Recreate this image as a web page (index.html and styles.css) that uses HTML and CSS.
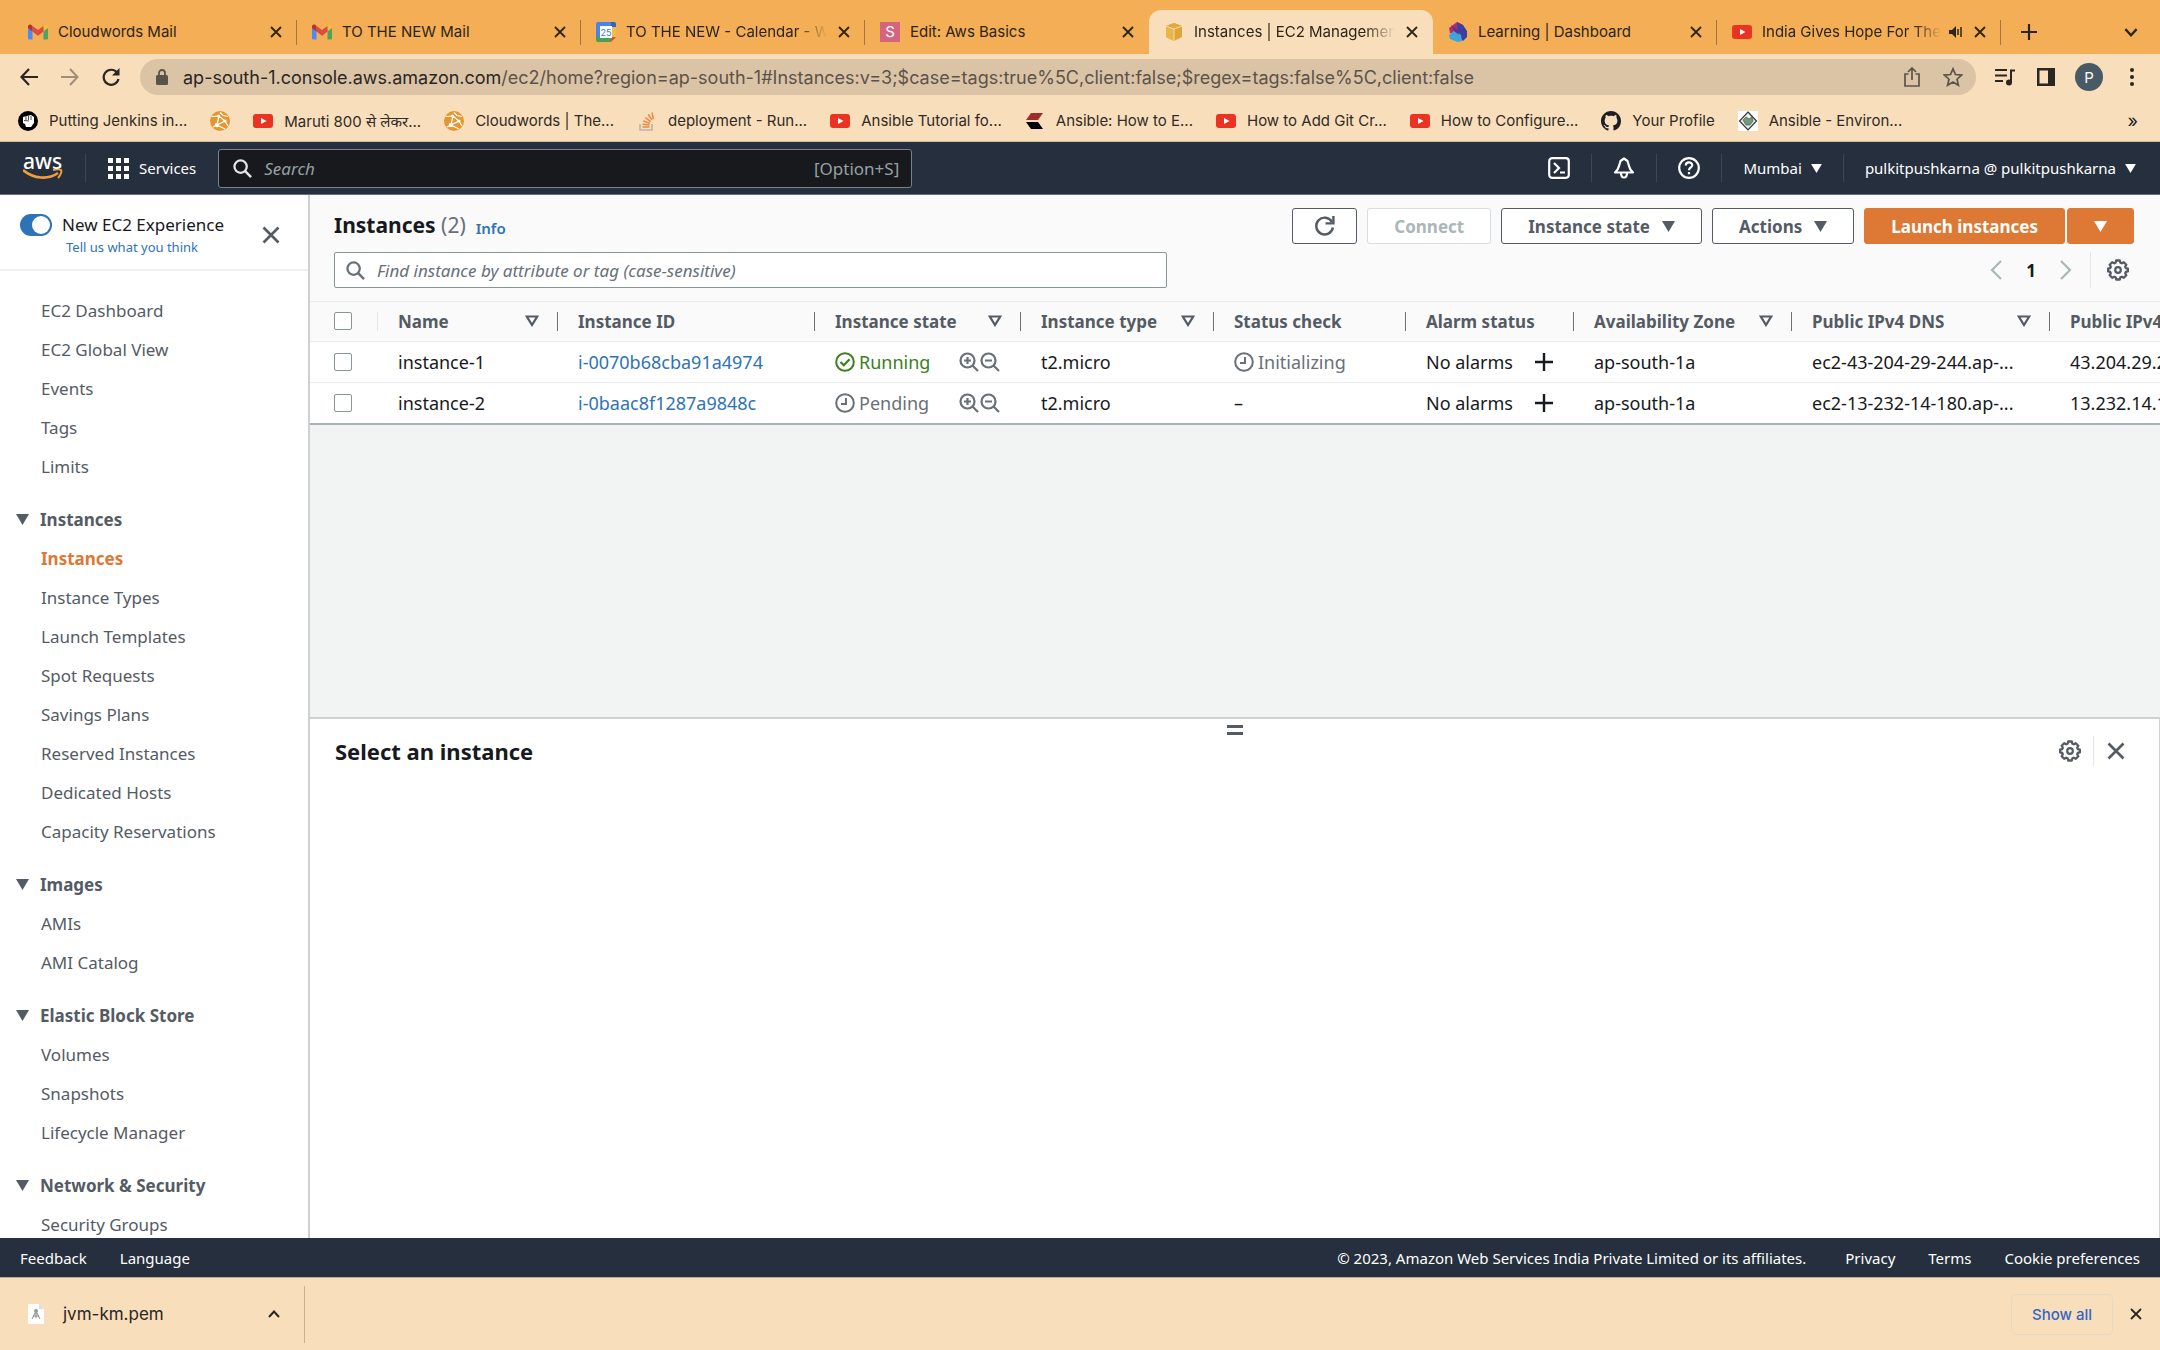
FILE: index.html
```html
<!DOCTYPE html>
<html lang="en">

<head>
    <meta charset="UTF-8">
    <meta name="viewport" content="width=device-width, initial-scale=1.0">
    <title>Instances | EC2 Management Console</title>
    <link rel="stylesheet" href="styles.css">
</head>

<body>

    <!-- shared icons -->
    <svg class="sprite" aria-hidden="true">
        <symbol id="i-close" viewBox="0 0 12 12"><path d="M1 1l10 10M11 1L1 11" fill="none" stroke="currentColor" stroke-width="1.8"/></symbol>
        <symbol id="i-gmail" viewBox="0 0 20 15">
            <path d="M0 2v11.500a1.500 1.500 0 0 0 1.500 1.500H4.500V5z" fill="#4c8bf5"/>
            <path d="M20 2v11.500a1.500 1.500 0 0 1-1.500 1.500H15.500V5z" fill="#4aa45a"/>
            <path d="M15.500 1.500V7L20 3.600V2c0-1.800-2-2.700-3.400-1.600z" fill="#f2bd42"/>
            <path d="M4.500 7V1.500L10 5.600l5.500-4.100V7L10 11.200z" fill="#dc4b3e"/>
            <path d="M0 2v1.600L4.500 7V1.500L3.400.4C2-.7 0 .2 0 2z" fill="#b93226"/>
        </symbol>
        <symbol id="i-youtube" viewBox="0 0 20 14"><rect width="20" height="14" rx="3" fill="#ea3323"/><path d="M8 4l5.500 3L8 10z" fill="#fff"/></symbol>
        <symbol id="i-cloudwords" viewBox="0 0 20 20"><circle cx="10" cy="10" r="10" fill="#e5962f"/><path d="M1.500 5.500L9 5l6 5-8 4-4 2M9 5L7 14M15 10l3 5M7 14l8 4M10 1.500l3 3 5 1" fill="none" stroke="#fff" stroke-width="1.200"/><circle cx="8.500" cy="5" r="1.500" fill="#fff"/><circle cx="7" cy="14" r="2.200" fill="#fff"/><circle cx="15" cy="10" r="1.600" fill="#fff"/></symbol>
        <symbol id="i-search" viewBox="0 0 20 20"><circle cx="8" cy="8" r="6.500" fill="none" stroke="currentColor" stroke-width="2.400"/><path d="M12.800 12.800L19 19" stroke="currentColor" stroke-width="2.600"/></symbol>
        <symbol id="i-down" viewBox="0 0 12 10"><path d="M0 0h12L6 10z" fill="currentColor"/></symbol>
        <symbol id="i-sort" viewBox="0 0 14 12"><path d="M1.800 1.500h10.400L7 10z" fill="none" stroke="currentColor" stroke-width="2.200"/></symbol>
        <symbol id="i-gear" viewBox="0 0 22 22">
            <path d="M9.200 1.500h3.600l.6 2.200 1.400.6 2-1.100 2.500 2.500-1.100 2 .6 1.400 2.100.6v2.600l-2.100.6-.6 1.400 1.100 2-2.500 2.500-2-1.100-1.400.6-.6 2.200H9.200l-.6-2.200-1.400-.6-2 1.100-2.500-2.500 1.100-2-.6-1.400-2.100-.6V9.700l2.100-.6.6-1.400-1.100-2 2.500-2.500 2 1.100 1.400-.6z" fill="none" stroke="currentColor" stroke-width="2.300" stroke-linejoin="round"/>
            <circle cx="11" cy="11" r="2.800" fill="none" stroke="currentColor" stroke-width="2.200"/>
        </symbol>
        <symbol id="i-clock" viewBox="0 0 20 20"><circle cx="10" cy="10" r="8.800" fill="none" stroke="currentColor" stroke-width="2"/><path d="M11 5v6H6" fill="none" stroke="currentColor" stroke-width="2"/></symbol>
        <symbol id="i-check" viewBox="0 0 20 20"><circle cx="10" cy="10" r="8.800" fill="none" stroke="currentColor" stroke-width="2"/><path d="M5.500 10l3.300 3.300 5.800-6" fill="none" stroke="currentColor" stroke-width="2.200"/></symbol>
        <symbol id="i-zoom-in" viewBox="0 0 20 20"><circle cx="8.500" cy="8.500" r="7" fill="none" stroke="currentColor" stroke-width="2.200"/><path d="M13.500 13.500L19 19M8.500 5v7M5 8.500h7" stroke="currentColor" stroke-width="2.200"/></symbol>
        <symbol id="i-zoom-out" viewBox="0 0 20 20"><circle cx="8.500" cy="8.500" r="7" fill="none" stroke="currentColor" stroke-width="2.200"/><path d="M13.500 13.500L19 19M5 8.500h7" stroke="currentColor" stroke-width="2.200"/></symbol>
        <symbol id="i-plus" viewBox="0 0 18 18"><path d="M9 0v18M0 9h18" stroke="currentColor" stroke-width="2.400"/></symbol>
    </svg>

    <div class="tab-strip">
        <div class="tab">
            <svg class="tab-icon"><use href="#i-gmail"/></svg>
            <span class="tab-title">Cloudwords Mail</span>
            <button class="tab-close" aria-label="Close tab"><svg><use href="#i-close"/></svg></button>
        </div>
        <div class="tab">
            <svg class="tab-icon"><use href="#i-gmail"/></svg>
            <span class="tab-title">TO THE NEW Mail</span>
            <button class="tab-close" aria-label="Close tab"><svg><use href="#i-close"/></svg></button>
        </div>
        <div class="tab">
            <svg class="tab-icon" viewBox="0 0 20 20">
                <path d="M2 0h14v5H5v10H0V2a2 2 0 0 1 2-2z" fill="#4a83ee"/>
                <path d="M15 0h3a2 2 0 0 1 2 2v3h-5z" fill="#2b66c9"/>
                <path d="M15 5h5v10h-5z" fill="#f3bc42"/>
                <path d="M0 15h15v5H2a2 2 0 0 1-2-2z" fill="#48a052"/>
                <path d="M15 15h5l-5 5z" fill="#dc4a3d"/>
                <path d="M4 4h12v12H4z" fill="#fff"/>
                <text x="10" y="14" class="cal-day">25</text>
            </svg>
            <span class="tab-title fade">TO THE NEW - Calendar - Week</span>
            <button class="tab-close" aria-label="Close tab"><svg><use href="#i-close"/></svg></button>
        </div>
        <div class="tab before-active">
            <span class="tab-icon tab-letter">S</span>
            <span class="tab-title">Edit: Aws Basics</span>
            <button class="tab-close" aria-label="Close tab"><svg><use href="#i-close"/></svg></button>
        </div>
        <div class="tab active">
            <svg class="tab-icon" viewBox="0 0 20 20">
                <path d="M10 1l8 3v11l-8 4-8-4V4z" fill="#dfa53a"/>
                <path d="M2 4l8 3v12l-8-4z" fill="#e9b44b"/>
                <path d="M2 4l8-3 8 3-8 3z" fill="#e3a93c"/>
                <path d="M2 4l8 3 8-3M10 7v12" fill="none" stroke="#f7dca0"/>
            </svg>
            <span class="tab-title fade">Instances | EC2 Management Console</span>
            <button class="tab-close" aria-label="Close tab"><svg><use href="#i-close"/></svg></button>
        </div>
        <div class="tab">
            <svg class="tab-icon" viewBox="0 0 20 20">
                <path d="M9 0l6 3 1 7-6 4-8-3L1 6z" fill="#b52c6d"/>
                <path d="M9 0l6 3 4 6v6l-4 4-5-5z" fill="#3b3f9f"/>
                <path d="M7 8l6 5 1 6-4 1-8-3-1-4z" fill="#39a6e0"/>
                <path d="M3 3l6 4 2 6-5-4z" fill="#6b2c91"/>
            </svg>
            <span class="tab-title">Learning | Dashboard</span>
            <button class="tab-close" aria-label="Close tab"><svg><use href="#i-close"/></svg></button>
        </div>
        <div class="tab">
            <svg class="tab-icon"><use href="#i-youtube"/></svg>
            <span class="tab-title fade">India Gives Hope For The World</span>
            <svg class="tab-audio" viewBox="0 0 14 12"><path d="M0 4h3l4-4v12L3 8H0z" fill="currentColor"/><path d="M9 3v6M12 1v10" stroke="currentColor" stroke-width="1.500"/></svg>
            <button class="tab-close" aria-label="Close tab"><svg><use href="#i-close"/></svg></button>
        </div>
        <button class="new-tab" aria-label="New tab"><svg viewBox="0 0 16 16"><path d="M8 0v16M0 8h16" stroke="currentColor" stroke-width="2.200"/></svg></button>
        <button class="tab-search" aria-label="Search tabs"><svg viewBox="0 0 12 8"><path d="M1 1l5 5.500L11 1" fill="none" stroke="currentColor" stroke-width="2"/></svg></button>
    </div>

    <div class="toolbar">
        <button aria-label="Back"><svg viewBox="0 0 20 20"><path d="M19 10H3M10 2l-7.500 8 7.500 8" fill="none" stroke="currentColor" stroke-width="2.200"/></svg></button>
        <button class="dim" aria-label="Forward"><svg viewBox="0 0 20 20"><path d="M1 10h16M10 2l7.500 8-7.500 8" fill="none" stroke="currentColor" stroke-width="2"/></svg></button>
        <button aria-label="Reload"><svg viewBox="0 0 20 20"><path d="M16 5.500A7.500 7.500 0 1 0 17.500 12" fill="none" stroke="currentColor" stroke-width="2.200"/><path d="M18.500 1v7.500H11z" fill="currentColor"/></svg></button>
        <div class="address">
            <svg class="lock" viewBox="0 0 12 16"><rect y="6" width="12" height="10" rx="1.500" fill="currentColor"/><path d="M3 7V4a3 3 0 0 1 6 0v3" fill="none" stroke="currentColor" stroke-width="1.800"/></svg>
            <span class="url"><b>ap-south-1.console.aws.amazon.com</b>/ec2/home?region=ap-south-1#Instances:v=3;$case=tags:true%5C,client:false;$regex=tags:false%5C,client:false</span>
            <button aria-label="Share"><svg viewBox="0 0 18 20"><path d="M5.500 7H2v12h14V7h-3.500M9 13V1.500M5 5l4-4 4 4" fill="none" stroke="currentColor" stroke-width="1.700"/></svg></button>
            <button aria-label="Bookmark this tab"><svg viewBox="0 0 20 20"><path d="M10 1.800l2.500 5.700 6.200.6-4.700 4.100 1.400 6.100L10 15.100l-5.400 3.200L6 12.200 1.300 8.100l6.200-.6z" fill="none" stroke="currentColor" stroke-width="1.700"/></svg></button>
        </div>
        <button aria-label="Media controls"><svg viewBox="0 0 20 20"><path d="M0 3h12M0 8.500h12M0 14h8M16 15V3.500h4" fill="none" stroke="currentColor" stroke-width="2"/><circle cx="14" cy="15.500" r="3" fill="currentColor"/></svg></button>
        <button aria-label="Side panel"><svg viewBox="0 0 20 20"><path d="M1 1h18v18H1zM3.500 3.500v13H12v-13z" fill="currentColor" fill-rule="evenodd"/></svg></button>
        <button class="avatar">P</button>
        <button aria-label="Menu"><svg viewBox="0 0 20 20"><g fill="currentColor"><circle cx="10" cy="3" r="2"/><circle cx="10" cy="10" r="2"/><circle cx="10" cy="17" r="2"/></g></svg></button>
    </div>

    <div class="bookmarks">
        <a href="#"><svg viewBox="0 0 20 20"><circle cx="10" cy="10" r="10" fill="#000"/><path d="M5 6l8-2 3 2v6l-3 4H8l-1-3-2-1z" fill="#fff"/><path d="M8 5.500V9M10.500 5v4M13 5v4M6 9.500l5 .5" stroke="#000" stroke-width=".7"/></svg>Putting Jenkins in...</a>
        <a href="#" aria-label="Cloudwords"><svg><use href="#i-cloudwords"/></svg></a>
        <a href="#"><svg><use href="#i-youtube"/></svg>Maruti 800 से लेकर...</a>
        <a href="#"><svg><use href="#i-cloudwords"/></svg>Cloudwords | The...</a>
        <a href="#"><svg viewBox="0 0 20 20"><path d="M3 13v6h12v-6" fill="none" stroke="#b9b5b0" stroke-width="1.600"/><path d="M5.500 16h7M5.600 13.200l7 .8M6.300 10l6.600 2.200M8.200 6.500l5.500 4.200M11.200 3.500l4 5.500M15 1.500l1.500 6.500" stroke="#e88a45" stroke-width="1.500"/></svg>deployment - Run...</a>
        <a href="#"><svg><use href="#i-youtube"/></svg>Ansible Tutorial fo...</a>
        <a href="#"><svg viewBox="0 0 20 20"><path d="M6 2h12l-5 7H1z" fill="#a12c2c"/><path d="M1 11h12l5 7H6z" fill="#000"/></svg>Ansible: How to E...</a>
        <a href="#"><svg><use href="#i-youtube"/></svg>How to Add Git Cr...</a>
        <a href="#"><svg><use href="#i-youtube"/></svg>How to Configure...</a>
        <a href="#"><svg viewBox="0 0 16 16"><path fill="#1b1f23" d="M8 0C3.580 0 0 3.580 0 8c0 3.540 2.290 6.530 5.470 7.590.4.070.550-.170.550-.380 0-.190-.010-.820-.010-1.490-2.010.370-2.530-.490-2.690-.940-.090-.230-.480-.940-.820-1.130-.280-.150-.680-.520-.010-.530.630-.010 1.080.580 1.230.820.720 1.210 1.870.870 2.330.660.070-.520.280-.870.510-1.070-1.780-.2-3.640-.890-3.640-3.950 0-.870.310-1.590.820-2.150-.080-.2-.360-1.020.080-2.120 0 0 .670-.210 2.200.820.640-.180 1.320-.270 2-.270s1.360.090 2 .270c1.530-1.040 2.200-.820 2.200-.820.440 1.100.160 1.920.080 2.120.510.560.820 1.270.820 2.150 0 3.070-1.870 3.750-3.650 3.950.290.250.540.730.540 1.480 0 1.070-.010 1.930-.010 2.200 0 .210.150.460.550.380A8.010 8.010 0 0 0 16 8c0-4.420-3.580-8-8-8z"/></svg>Your Profile</a>
        <a href="#"><svg viewBox="0 0 20 20"><rect width="20" height="20" fill="#fff"/><path d="M10 1l8.500 9L10 19 1.500 10z" fill="#e6ece6" stroke="#333" stroke-width="1.200"/><path d="M5 9l3-3 3 2 3-2 1 4-3 4H8z" fill="#6f9b78" stroke="#444" stroke-width=".6"/></svg>Ansible - Environ...</a>
        <button class="more" aria-label="More bookmarks">»</button>
    </div>

    <header class="aws-header">
        <a class="aws-logo" href="#" aria-label="AWS home">
            <span>aws</span>
            <svg viewBox="0 0 40 12"><path d="M0 1c11 9 25 10 35 3" fill="none" stroke="#f19d38" stroke-width="2.600"/><path d="M30 1c4-1 7-1 8 0s0 5-3 8" fill="none" stroke="#f19d38" stroke-width="2"/></svg>
        </a>
        <button class="services">
            <svg viewBox="0 0 21 21"><path d="M0 0h5v5H0zM8 0h5v5H8zM16 0h5v5h-5zM0 8h5v5H0zM8 8h5v5H8zM16 8h5v5h-5zM0 16h5v5H0zM8 16h5v5H8zM16 16h5v5h-5z" fill="currentColor"/></svg>
            Services
        </button>
        <div class="global-search">
            <svg><use href="#i-search"/></svg>
            <input type="text" placeholder="Search" aria-label="Search">
            <span>[Option+S]</span>
        </div>
        <nav class="header-right">
            <button aria-label="CloudShell"><svg viewBox="0 0 22 22"><rect x="1.200" y="1.200" width="19.600" height="19.600" rx="3" fill="none" stroke="currentColor" stroke-width="2.200"/><path d="M6 6l5 5-5 5M12 15.500h5" fill="none" stroke="currentColor" stroke-width="2.200"/></svg></button>
            <button aria-label="Notifications"><svg viewBox="0 0 22 22"><path d="M11 1.500L7.500 4 6 9c-.5 3-2 4.500-4 6.500h18c-2-2-3.500-3.500-4-6.500l-1.500-5zM8 16c0 6 6 6 6 0" fill="none" stroke="currentColor" stroke-width="2.200" stroke-linejoin="round"/></svg></button>
            <button aria-label="Help"><svg viewBox="0 0 22 22"><circle cx="11" cy="11" r="9.800" fill="none" stroke="currentColor" stroke-width="2.200"/><path d="M7.800 8.500c0-4 6.400-4 6.400-.3 0 2.300-3.200 2.300-3.200 5M11 15v2.200" fill="none" stroke="currentColor" stroke-width="2.200"/></svg></button>
            <button>Mumbai <svg class="caret"><use href="#i-down"/></svg></button>
            <button>pulkitpushkarna @ pulkitpushkarna <svg class="caret"><use href="#i-down"/></svg></button>
        </nav>
    </header>

    <div class="console">
        <aside class="sidebar">
            <div class="sidebar-top">
                <div class="experience">
                    <label><input type="checkbox" class="toggle" checked>New EC2 Experience</label>
                    <a href="#">Tell us what you think</a>
                </div>
                <button class="icon-btn" aria-label="Close navigation"><svg><use href="#i-close"/></svg></button>
            </div>
            <nav class="side-nav">
                <ul>
                    <li><a href="#">EC2 Dashboard</a></li>
                    <li><a href="#">EC2 Global View</a></li>
                    <li><a href="#">Events</a></li>
                    <li><a href="#">Tags</a></li>
                    <li><a href="#">Limits</a></li>
                </ul>
                <h3><svg><use href="#i-down"/></svg>Instances</h3>
                <ul>
                    <li><a class="current" href="#">Instances</a></li>
                    <li><a href="#">Instance Types</a></li>
                    <li><a href="#">Launch Templates</a></li>
                    <li><a href="#">Spot Requests</a></li>
                    <li><a href="#">Savings Plans</a></li>
                    <li><a href="#">Reserved Instances</a></li>
                    <li><a href="#">Dedicated Hosts</a></li>
                    <li><a href="#">Capacity Reservations</a></li>
                </ul>
                <h3><svg><use href="#i-down"/></svg>Images</h3>
                <ul>
                    <li><a href="#">AMIs</a></li>
                    <li><a href="#">AMI Catalog</a></li>
                </ul>
                <h3><svg><use href="#i-down"/></svg>Elastic Block Store</h3>
                <ul>
                    <li><a href="#">Volumes</a></li>
                    <li><a href="#">Snapshots</a></li>
                    <li><a href="#">Lifecycle Manager</a></li>
                </ul>
                <h3><svg><use href="#i-down"/></svg>Network &amp; Security</h3>
                <ul>
                    <li><a href="#">Security Groups</a></li>
                </ul>
            </nav>
        </aside>

        <main class="content">
            <section class="instances">
                <div class="table-tools">
                    <div class="title-row">
                        <h1>Instances <span>(2)</span></h1>
                        <a href="#">Info</a>
                        <div class="actions">
                            <button class="btn refresh" aria-label="Refresh"><svg viewBox="0 0 20 20"><path d="M17 5.500A8 8 0 1 0 18 11" fill="none" stroke="currentColor" stroke-width="2.300"/><path d="M18.500 0v7H11" fill="none" stroke="currentColor" stroke-width="2.300"/></svg></button>
                            <button class="btn" disabled>Connect</button>
                            <button class="btn">Instance state <svg class="arrow"><use href="#i-down"/></svg></button>
                            <button class="btn">Actions <svg class="arrow"><use href="#i-down"/></svg></button>
                            <div class="split-btn">
                                <button class="btn primary">Launch instances</button>
                                <button class="btn primary" aria-label="More launch options"><svg class="arrow"><use href="#i-down"/></svg></button>
                            </div>
                        </div>
                    </div>
                    <div class="filter-row">
                        <div class="filter">
                            <svg><use href="#i-search"/></svg>
                            <input type="text" placeholder="Find instance by attribute or tag (case-sensitive)" aria-label="Find instance">
                        </div>
                        <div class="pagination">
                            <button aria-label="Previous page"><svg viewBox="0 0 12 20"><path d="M11 1L2 10l9 9" fill="none" stroke="currentColor" stroke-width="2.200"/></svg></button>
                            <span>1</span>
                            <button aria-label="Next page"><svg viewBox="0 0 12 20"><path d="M1 1l9 9-9 9" fill="none" stroke="currentColor" stroke-width="2.200"/></svg></button>
                        </div>
                        <button class="icon-btn divided" aria-label="Preferences"><svg><use href="#i-gear"/></svg></button>
                    </div>
                </div>

                <div class="table-wrap">
                    <table>
                        <colgroup>
                            <col class="c-check"><col class="c-name"><col class="c-id"><col class="c-state"><col class="c-type"><col class="c-status"><col class="c-alarm"><col class="c-zone"><col class="c-dns"><col class="c-ip">
                        </colgroup>
                        <thead>
                            <tr>
                                <th class="light"><input type="checkbox" aria-label="Select all"></th>
                                <th><div>Name <svg><use href="#i-sort"/></svg></div></th>
                                <th><div>Instance ID</div></th>
                                <th><div>Instance state <svg><use href="#i-sort"/></svg></div></th>
                                <th><div>Instance type <svg><use href="#i-sort"/></svg></div></th>
                                <th><div>Status check</div></th>
                                <th><div>Alarm status</div></th>
                                <th><div>Availability Zone <svg><use href="#i-sort"/></svg></div></th>
                                <th><div>Public IPv4 DNS <svg><use href="#i-sort"/></svg></div></th>
                                <th><div>Public IPv4 address</div></th>
                            </tr>
                        </thead>
                        <tbody>
                            <tr>
                                <td><input type="checkbox" aria-label="Select instance-1"></td>
                                <td>instance-1</td>
                                <td><a href="#">i-0070b68cba91a4974</a></td>
                                <td><div class="state"><span class="status running"><svg><use href="#i-check"/></svg>Running</span><button aria-label="Add filter"><svg><use href="#i-zoom-in"/></svg></button><button aria-label="Exclude filter"><svg><use href="#i-zoom-out"/></svg></button></div></td>
                                <td>t2.micro</td>
                                <td><span class="status"><svg><use href="#i-clock"/></svg>Initializing</span></td>
                                <td><div class="alarm">No alarms <button aria-label="Add alarm"><svg><use href="#i-plus"/></svg></button></div></td>
                                <td>ap-south-1a</td>
                                <td>ec2-43-204-29-244.ap-...</td>
                                <td>43.204.29.244</td>
                            </tr>
                            <tr>
                                <td><input type="checkbox" aria-label="Select instance-2"></td>
                                <td>instance-2</td>
                                <td><a href="#">i-0baac8f1287a9848c</a></td>
                                <td><div class="state"><span class="status"><svg><use href="#i-clock"/></svg>Pending</span><button aria-label="Add filter"><svg><use href="#i-zoom-in"/></svg></button><button aria-label="Exclude filter"><svg><use href="#i-zoom-out"/></svg></button></div></td>
                                <td>t2.micro</td>
                                <td>–</td>
                                <td><div class="alarm">No alarms <button aria-label="Add alarm"><svg><use href="#i-plus"/></svg></button></div></td>
                                <td>ap-south-1a</td>
                                <td>ec2-13-232-14-180.ap-...</td>
                                <td>13.232.14.180</td>
                            </tr>
                        </tbody>
                    </table>
                </div>
            </section>

            <section class="split-panel">
                <button class="handle" aria-label="Resize panel"></button>
                <div class="panel-head">
                    <h2>Select an instance</h2>
                    <button class="icon-btn" aria-label="Panel preferences"><svg><use href="#i-gear"/></svg></button>
                    <button class="icon-btn divided" aria-label="Close panel"><svg class="x"><use href="#i-close"/></svg></button>
                </div>
            </section>
        </main>
    </div>

    <footer class="aws-footer">
        <a href="#">Feedback</a>
        <a href="#">Language</a>
        <span>© 2023, Amazon Web Services India Private Limited or its affiliates.</span>
        <a href="#">Privacy</a>
        <a href="#">Terms</a>
        <a href="#">Cookie preferences</a>
    </footer>

    <div class="downloads">
        <div class="download-item">
            <svg class="file" viewBox="0 0 16 20"><path d="M0 0h11l5 5v15H0z" fill="#fff"/><path d="M11 0v5h5z" fill="#ddd"/><circle cx="8" cy="7" r="2" fill="#999"/><path d="M4 15l3-6h2l3 6M5 12h6M8 9v5" fill="none" stroke="#888"/></svg>
            <span>jvm-km.pem</span>
            <button aria-label="Download options"><svg viewBox="0 0 12 8"><path d="M1 7l5-5.500L11 7" fill="none" stroke="currentColor" stroke-width="2"/></svg></button>
        </div>
        <button class="show-all">Show all</button>
        <button aria-label="Close downloads"><svg viewBox="0 0 12 12"><use href="#i-close"/></svg></button>
    </div>

</body>

</html>
```
FILE: styles.css
```css
* {
    box-sizing: border-box;
}

body {
    margin: 0;
    height: 100vh;
    display: flex;
    flex-direction: column;
    overflow: hidden;
    font-family: 'Noto Sans', sans-serif;
    font-size: 17px;
    color: #17191e;
    background-color: white;
}

a {
    color: #2e73b8;
    text-decoration: none;
}

button {
    display: flex;
    align-items: center;
    justify-content: center;
    padding: 0;
    border: none;
    background: none;
    color: inherit;
    font: inherit;
    cursor: pointer;
}

svg {
    display: block;
    flex: none;
}

h1,
h2,
h3,
ul {
    margin: 0;
    padding: 0;
}

.sprite {
    display: none;
}

/* browser tabs */
.tab-strip {
    display: flex;
    flex: none;
    height: 54px;
    padding: 10px 22px 0 13px;
    background-color: #f4ae56;
    color: #2c2519;
    font-family: Inter, sans-serif;
    font-size: 15px;
}

.tab {
    position: relative;
    display: flex;
    align-items: center;
    flex: 0 1 284px;
    min-width: 0;
    padding: 0 15px;
}

.tab::after {
    content: "";
    position: absolute;
    right: 0;
    top: 10px;
    height: 25px;
    border-right: 1px solid #a5763b;
}

.tab.active::after,
.tab.before-active::after {
    display: none;
}

.tab.active {
    background-color: #f9debc;
    border-radius: 12px 12px 0 0;
}

.tab-icon {
    width: 20px;
    height: 20px;
    margin-right: 10px;
}

.tab-letter {
    background-color: #d4657f;
    color: white;
    text-align: center;
    line-height: 20px;
}

.cal-day {
    fill: #3c73d8;
    font-size: 9px;
    text-anchor: middle;
}

.tab-title {
    flex: 1;
    min-width: 0;
    overflow: hidden;
    white-space: nowrap;
    line-height: 20px;
}

.tab-title.fade {
    -webkit-mask-image: linear-gradient(to right, black 85%, transparent);
    mask-image: linear-gradient(to right, black 85%, transparent);
}

.tab-audio {
    width: 14px;
    height: 12px;
    margin-left: 8px;
}

.tab-close {
    margin-left: 11px;
    width: 12px;
}

.tab-close svg {
    width: 12px;
    height: 12px;
}

.new-tab {
    margin-left: 20px;
}

.new-tab svg {
    width: 16px;
    height: 16px;
}

.tab-search {
    margin-left: auto;
}

.tab-search svg {
    width: 14px;
    height: 9px;
}

/* address bar */
.toolbar {
    display: flex;
    align-items: center;
    gap: 17px;
    flex: none;
    height: 46px;
    padding: 0 16px 0 17px;
    background-color: #f9debc;
    color: #2a2622;
    font-family: Inter, sans-serif;
}

.toolbar button {
    width: 24px;
    height: 28px;
}

.toolbar svg {
    width: 20px;
    height: 20px;
}

.toolbar .dim {
    color: #9e8e7a;
}

.address {
    display: flex;
    align-items: center;
    gap: 15px;
    flex: 1;
    min-width: 0;
    height: 36px;
    padding: 0 10px 0 16px;
    border-radius: 18px;
    background-color: #dbc4a6;
    color: #5b5349;
}

.address button {
    width: 26px;
}

.address .lock {
    width: 12px;
    height: 16px;
}

.url {
    flex: 1;
    overflow: hidden;
    white-space: nowrap;
    font-size: 18px;
}

.url b {
    font-weight: normal;
    color: #2a2622;
}

.toolbar .avatar {
    width: 28px;
    border-radius: 50%;
    background-color: #475a66;
    color: white;
    font-size: 15px;
}

/* bookmarks */
.bookmarks {
    display: flex;
    align-items: center;
    gap: 23px;
    flex: none;
    height: 42px;
    padding: 0 22px 0 18px;
    background-color: #f9debc;
    border-bottom: 1px solid #cbbba2;
    font-family: Inter, 'Noto Sans', sans-serif;
    font-size: 15px;
    white-space: nowrap;
}

.bookmarks a {
    display: flex;
    align-items: center;
    gap: 11px;
    color: #2f2b26;
}

.bookmarks svg {
    width: 20px;
    height: 20px;
}

.more {
    margin-left: auto;
    font-size: 18px;
}

/* console header */
.aws-header {
    display: flex;
    align-items: center;
    flex: none;
    height: 53px;
    padding: 0 3px 0 23px;
    background-color: #262f3e;
    border-bottom: 1px solid #6a717b;
    color: white;
    font-size: 15px;
}

.aws-logo {
    width: 63px;
    height: 28px;
    border-right: 1px solid #3d4653;
    color: white;
    font-size: 21px;
    font-weight: 500;
    line-height: 15px;
}

.aws-logo svg {
    width: 40px;
    height: 12px;
}

.services {
    gap: 10px;
    margin: 0 22px 0 22px;
}

.services svg {
    width: 21px;
    height: 21px;
}

.global-search {
    display: flex;
    align-items: center;
    flex: 0 1 694px;
    height: 39px;
    padding: 0 12px 0 14px;
    border: 1px solid #74858a;
    border-radius: 3px;
    background-color: #17191d;
    color: #95a1a3;
    font-size: 17px;
}

.global-search svg {
    width: 19px;
    height: 19px;
    color: #e3e6e6;
}

.global-search input {
    flex: 1;
    min-width: 0;
    padding: 0 12px;
    border: none;
    outline: none;
    background: none;
    color: white;
    font: inherit;
}

.global-search input::placeholder {
    color: #95a1a3;
    font-style: italic;
}

.header-right {
    display: flex;
    margin-left: auto;
}

.header-right button {
    height: 28px;
    gap: 9px;
    padding: 0 21px;
    border-left: 1px solid #3d4653;
}

.header-right button:first-child {
    border-left: none;
}

.header-right svg {
    width: 22px;
    height: 22px;
}

.header-right .caret {
    width: 11px;
    height: 9px;
}

/* layout */
.console {
    display: flex;
    flex: 1;
    min-height: 0;
}

.sidebar {
    flex: 0 0 310px;
    overflow: hidden;
    border-right: 2px solid #cdd1d2;
}

.sidebar-top {
    display: flex;
    justify-content: space-between;
    height: 76px;
    padding: 17px 28px 0 20px;
    border-bottom: 2px solid #efefef;
}

.experience label {
    display: flex;
    align-items: center;
    gap: 10px;
    line-height: 26px;
}

.experience a {
    display: block;
    padding-left: 46px;
    font-size: 13px;
    line-height: 18px;
}

.toggle {
    appearance: none;
    width: 32px;
    height: 22px;
    margin: 0;
    padding: 2px;
    border-radius: 11px;
    background-color: #2e73b8;
}

.toggle::before {
    content: "";
    display: block;
    width: 18px;
    height: 18px;
    margin-left: auto;
    border-radius: 50%;
    background-color: white;
}

.icon-btn {
    color: #545b64;
}

.icon-btn svg {
    width: 22px;
    height: 22px;
}

.sidebar-top .icon-btn {
    height: 46px;
}

.icon-btn .x,
.sidebar-top .icon-btn svg {
    width: 18px;
    height: 18px;
}

.side-nav {
    padding: 20px 0 0 16px;
}

.side-nav ul {
    list-style: none;
    padding-left: 25px;
}

.side-nav li {
    line-height: 39px;
}

.side-nav a {
    color: #545b64;
}

.side-nav .current {
    color: #dd7835;
    font-weight: bold;
}

.side-nav h3 {
    display: flex;
    align-items: center;
    gap: 11px;
    margin-top: 14px;
    color: #545b64;
    font-size: 17px;
    line-height: 39px;
}

.side-nav h3 svg {
    width: 13px;
    height: 11px;
}

.content {
    display: flex;
    flex-direction: column;
    flex: 1;
    min-width: 0;
    background-color: #f2f4f4;
}

.instances {
    flex: 1 1 50%;
    min-height: 0;
}

.table-tools {
    padding: 13px 26px 13px 24px;
    background-color: #fafafa;
    border-bottom: 1px solid #e9ebec;
}

.title-row {
    display: flex;
    align-items: center;
    height: 36px;
}

.title-row h1 {
    font-size: 21px;
    line-height: 34px;
    align-self: flex-start;
}

.title-row h1 span {
    color: #687078;
    font-weight: normal;
}

.title-row a {
    margin: 3px 0 0 10px;
    font-size: 15px;
    font-weight: 600;
}

.actions {
    display: flex;
    gap: 10px;
    margin-left: auto;
}

.btn {
    height: 36px;
    gap: 12px;
    padding: 0 26px;
    border: 1px solid #545b64;
    border-radius: 3px;
    background-color: white;
    color: #545b64;
    font-weight: bold;
}

.btn:disabled {
    border-color: #d9dddd;
    color: #aab7b8;
}

.btn .arrow {
    width: 13px;
    height: 11px;
}

.refresh {
    padding: 0 21px;
}

.refresh svg {
    width: 21px;
    height: 21px;
}

.split-btn {
    display: flex;
    gap: 2px;
}

.primary {
    border-color: #dd7835;
    background-color: #dd7835;
    color: white;
}

.filter-row {
    display: flex;
    align-items: center;
    margin-top: 8px;
}

.filter {
    display: flex;
    align-items: center;
    flex: 0 1 833px;
    height: 36px;
    margin-right: auto;
    padding: 0 11px;
    border: 1px solid #879596;
    border-radius: 2px;
    background-color: white;
    color: #687078;
}

.filter svg {
    width: 19px;
    height: 19px;
}

.filter input {
    flex: 1;
    padding: 0 12px;
    border: none;
    outline: none;
    background: none;
    font: inherit;
}

.filter input::placeholder {
    color: #687078;
    font-style: italic;
}

.pagination {
    display: flex;
    align-items: center;
    gap: 24px;
    margin-right: 18px;
    font-weight: bold;
}

.pagination button {
    color: #aab7b8;
}

.pagination svg {
    width: 12px;
    height: 20px;
}

.divided {
    height: 36px;
    padding-left: 16px;
    border-left: 1px solid #e6e8e8;
}

.filter-row .divided {
    padding-right: 5px;
}

/* instances table */
.table-wrap {
    overflow: hidden;
    background-color: white;
    border-bottom: 2px solid #a9b2b4;
}

table {
    width: 100%;
    table-layout: fixed;
    border-collapse: collapse;
}

.c-check {
    width: 68px;
}

.c-name {
    width: 180px;
}

.c-id {
    width: 257px;
}

.c-state {
    width: 206px;
}

.c-type {
    width: 193px;
}

.c-status {
    width: 192px;
}

.c-alarm {
    width: 168px;
}

.c-zone {
    width: 218px;
}

.c-dns {
    width: 258px;
}

.c-ip {
    width: 220px;
}

th,
td {
    height: 41px;
    padding: 0 0 0 20px;
    border-bottom: 1px solid #e9ebec;
    text-align: left;
    white-space: nowrap;
}

td {
    font-size: 18px;
}

th:first-child,
td:first-child {
    padding-left: 24px;
}

tbody tr:last-child td {
    border-bottom: none;
}

th {
    height: 39px;
    background-color: #fafafa;
    color: #545b64;
    background-image: linear-gradient(#687078, #687078);
    background-size: 1px 19px;
    background-position: right center;
    background-repeat: no-repeat;
}

th.light {
    background-image: linear-gradient(#e6e8e8, #e6e8e8);
}

th div {
    display: flex;
    align-items: center;
    justify-content: space-between;
    padding-right: 19px;
}

th svg {
    width: 14px;
    height: 12px;
}

td input,
th input {
    appearance: none;
    display: block;
    width: 18px;
    height: 18px;
    margin: 0;
    border: 1px solid #879596;
    border-radius: 2px;
    background-color: white;
}

.state,
.status,
.alarm {
    display: flex;
    align-items: center;
}

.status {
    gap: 4px;
    color: #687078;
}

.status.running {
    color: #3b7f1e;
}

.status svg,
.state svg {
    width: 20px;
    height: 20px;
}

.state .status {
    width: 124px;
}

.state button {
    margin-right: 1px;
    color: #687078;
}

.alarm {
    justify-content: space-between;
    padding-right: 21px;
}

.alarm svg {
    width: 18px;
    height: 18px;
}

/* split panel */
.split-panel {
    flex: 0 0 50%;
    border-top: 2px solid #cdd1d2;
    border-right: 1px solid #cdd1d2;
    background-color: white;
}

.handle {
    width: 16px;
    height: 10px;
    margin: 6px auto 0;
    border: solid #545b64;
    border-width: 3px 0;
}

.panel-head {
    display: flex;
    align-items: center;
    gap: 12px;
    height: 32px;
    padding: 0 34px 0 25px;
}

.panel-head h2 {
    margin-right: auto;
    font-size: 22px;
}

.panel-head .divided {
    height: 30px;
    padding-left: 13px;
}

/* footer */
.aws-footer {
    display: flex;
    align-items: center;
    gap: 33px;
    flex: none;
    height: 39px;
    padding: 0 20px;
    background-color: #262f3e;
    color: white;
    font-size: 15px;
}

.aws-footer a {
    color: white;
}

.aws-footer span {
    margin: 0 6px 0 auto;
}

/* downloads bar */
.downloads {
    display: flex;
    align-items: center;
    flex: none;
    height: 73px;
    padding: 0 18px 0 28px;
    border-top: 1px solid #b9a78d;
    background-color: #f9debc;
    color: #2a2622;
    font-family: Inter, sans-serif;
}

.download-item {
    display: flex;
    align-items: center;
    flex: 0 0 277px;
    height: 57px;
    margin-right: auto;
    padding-right: 24px;
    border-right: 1px solid #c7b095;
}

.download-item button {
    margin-left: auto;
}

.file {
    width: 16px;
    height: 20px;
    margin-right: 19px;
}

.downloads button svg {
    width: 12px;
    height: 12px;
}

.downloads .show-all {
    height: 41px;
    margin-right: 17px;
    padding: 0 20px;
    border: 1px solid #e5d9c5;
    border-radius: 5px;
    color: #3466c4;
    font-size: 15px;
    font-weight: 500;
}
```
